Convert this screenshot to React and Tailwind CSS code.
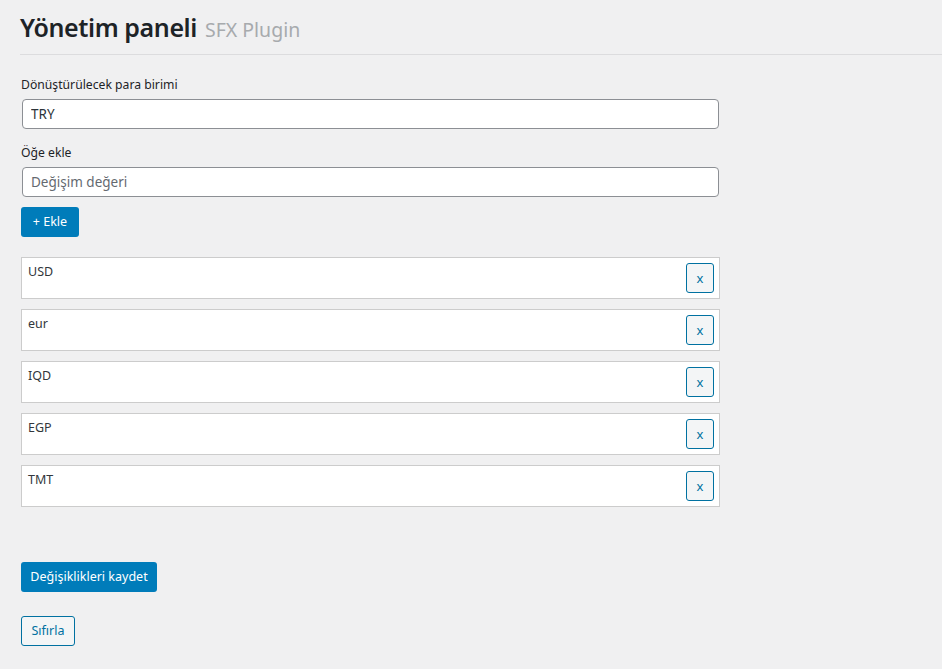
import React, { useState } from "react";

const itemsInicial = ["USD", "eur", "IQD", "EGP", "TMT"];

export default function App() {
  const [items, setItems] = useState(itemsInicial);
  const [valor, setValor] = useState("");

  return (
    <div className="min-h-[669px] bg-[#f0f0f1] text-[#1d2327] font-['Noto_Sans',sans-serif]">
      <div className="pl-5">
        <h1 className="pt-[10px] pb-[10px] flex items-baseline gap-2 border-b border-[#dcdcde]">
          <span className="text-[25px] font-semibold leading-[34px] tracking-[-0.4px]">Yönetim paneli</span>
          <span className="text-[19.5px] text-[#a7aaad]">SFX Plugin</span>
        </h1>

        <div className="w-[700px] pl-px pt-[21px]">
          <label className="block text-[12.2px] leading-[18px] mb-[5px]">Dönüştürülecek para birimi</label>
          <input
            defaultValue="TRY"
            className="ml-px w-[697px] h-[30px] bg-white border border-[#8c8f94] rounded-[4px] px-2 text-[13.5px] text-[#2c3338] outline-none"
          />

          <label className="block text-[12.2px] leading-[18px] mt-[15px] mb-[5px]">Öğe ekle</label>
          <input
            value={valor}
            onChange={e => setValor(e.target.value)}
            placeholder="Değişim değeri"
            className="ml-px w-[697px] h-[30px] bg-white border border-[#8c8f94] rounded-[4px] px-2 text-[13.5px] text-[#2c3338] placeholder:text-[#646970] outline-none"
          />

          <button
            onClick={() => { if (valor) { setItems([...items, valor]); setValor(""); } }}
            className="mt-[10px] h-[30px] w-[58px] bg-[#007cba] text-white text-[12.5px] rounded-[3px]"
          >
            + Ekle
          </button>

          <div className="mt-[20px] flex flex-col gap-[10px]">
            {items.map((it, idx) => (
              <div key={idx} className="h-[42px] w-[699px] bg-white border border-[#ccc] flex justify-between pl-[6px] pr-[5px]">
                <span className="text-[12.5px] leading-[18px] pt-[5px] text-[#32373c]">{it}</span>
                <button
                  onClick={() => setItems(items.filter((_, i) => i !== idx))}
                  className="mt-[5px] w-[28px] h-[30px] border border-[#0071a1] bg-[#f3f5f6] text-[#0071a1] text-[13px] rounded-[3px] leading-none"
                >
                  x
                </button>
              </div>
            ))}
          </div>

          <button className="mt-[55px] block h-[30px] w-[136px] bg-[#007cba] text-white text-[12.5px] rounded-[3px]">
            Değişiklikleri kaydet
          </button>
          <button className="mt-[24px] block h-[30px] w-[54px] border border-[#0071a1] bg-[#f3f5f6] text-[#0071a1] text-[12.5px] rounded-[3px]">
            Sıfırla
          </button>
        </div>
      </div>
    </div>
  );
}
